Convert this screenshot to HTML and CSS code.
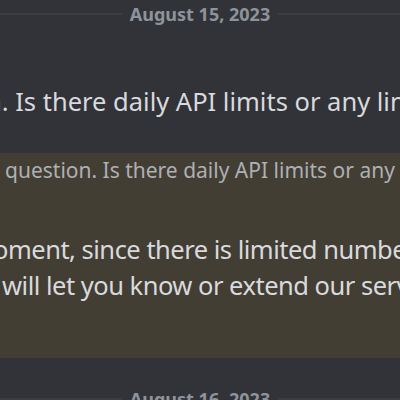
FILE: index.html
```html
<!DOCTYPE html>
<html>
<head>
<meta charset="utf-8">
<link rel="stylesheet" href="styles.css">
</head>
<body>
<div class="chat">
  <div class="divider"><span class="date">August 15, 2023</span></div>
  <div class="msg">
    <p class="line main-line">n. Is there daily API limits or any limitations?</p>
  </div>
  <div class="msg mention">
    <div class="reply">question. Is there daily API limits or any limitations?</div>
    <div class="header"></div>
    <p class="line line-a">oment, since there is limited number of requests</p>
    <p class="line line-b">e will let you know or extend our service</p>
  </div>
  <div class="divider divider-next"><span class="date">August 16, 2023</span></div>
</div>
</body>
</html>
```
FILE: styles.css
```css
html, body {
  margin: 0;
  padding: 0;
  width: 400px;
  height: 400px;
  overflow: hidden;
  background: #313338;
}
.chat {
  display: flex;
  flex-direction: column;
  font-family: "Noto Sans", "Open Sans", sans-serif;
}
.divider {
  height: 28px;
  display: flex;
  align-items: center;
  gap: 8px;
}
.divider::before, .divider::after {
  content: "";
  flex: 1;
  height: 2px;
  background: #3b3d43;
}
.date {
  font-size: 18px;
  font-weight: 700;
  line-height: 28px;
  color: #8e939b;
}
.divider-next {
  margin-top: 27px;
}
.msg {
  padding-top: 55px;
}
.line {
  margin: 0;
  white-space: nowrap;
  font-size: 25.5px;
  line-height: 36px;
  color: #d9dadd;
}
.main-line {
  margin-left: -14px;
}
.mention {
  margin-top: 34px;
  padding-top: 5px;
  padding-bottom: 55px;
  background: #433e34;
}
.reply {
  white-space: nowrap;
  font-size: 21px;
  line-height: 24px;
  color: #aeb0b4;
  margin-left: 5px;
}
.header {
  height: 49px;
}
.line-a {
  margin-left: -7px;
  letter-spacing: -0.5px;
}
.line-b {
  margin-left: -18px;
  letter-spacing: -0.5px;
}
```
